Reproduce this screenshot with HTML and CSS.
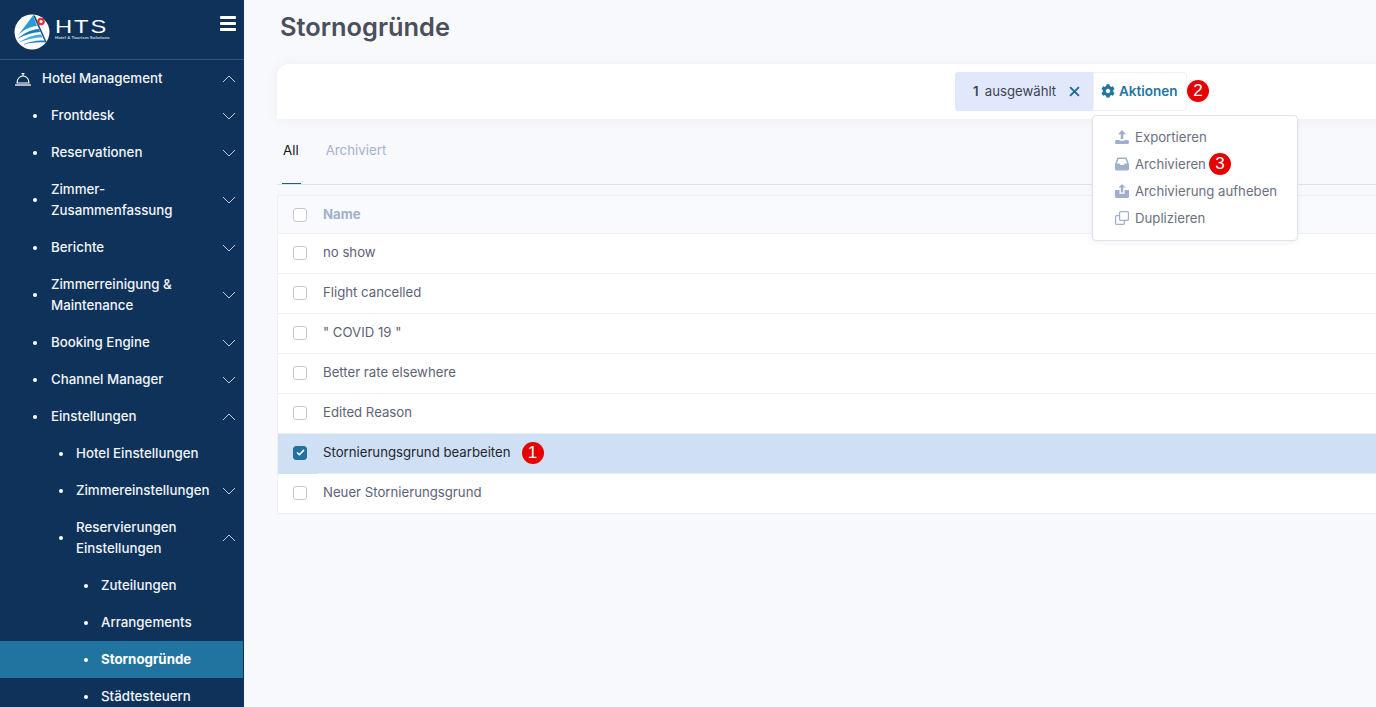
FILE: index.html
```html
<!DOCTYPE html>
<html lang="en">
<head>
    <meta charset="UTF-8">
    <meta name="viewport" content="width=device-width, initial-scale=1.0">
    <title>Stornogründe</title>
    <link rel="stylesheet" href="styles.css">
</head>
<body>
    <aside class="sidebar">
        <div class="brand">
            <svg class="brand-mark" viewBox="0 0 36 36" width="36" height="36">
                <circle cx="18" cy="18" r="17.500" fill="#fff"/>
                <path d="M19 1.500 L3.500 22 C9 16 16 12.500 23 12Z" fill="#2f9ad2"/>
                <path d="M3.500 25 C10 19 17 15.500 25 15 L26 18 C18 18.500 10 21 3.500 25Z" fill="#1c7db8"/>
                <path d="M5 28.500 C12 23.500 19 21 27 20.500 L28.500 23.500 C20 23.500 12 25.500 5 28.500Z" fill="#3fb0de"/>
                <path d="M8 31 C15 27.500 23 26 30 26.500 L32 28.500 C23 27.800 15 28.800 8 31Z" fill="#1c7db8"/>
                <path d="M19 1.500 L21 1.500 L33 29 L31 28Z" fill="#11588f"/>
                <circle cx="27" cy="7.500" r="3.800" fill="#d9363e"/>
                <circle cx="27" cy="7.500" r="1.500" fill="#fff"/>
            </svg>
            <div class="brand-text">
                <span class="brand-name">HTS</span>
                <span class="brand-sub">Hotel &amp; Tourism Solutions</span>
            </div>
            <div class="burger"><span></span><span></span><span></span></div>
        </div>
        <nav class="menu">
            <a class="menu-item level-0">
                <svg class="bell" viewBox="0 0 18 14" width="18" height="14" fill="none" stroke="#fff" stroke-width="1.100">
                    <path d="M3 11 C3 7 5.500 4 9 4 C12.500 4 15 7 15 11Z"/>
                    <path d="M9 4 V2 M7.500 1.600 H10.500"/>
                    <path d="M1 13 H17" stroke-width="1.300"/>
                </svg>
                <span class="label">Hotel Management</span>
                <svg class="chev" viewBox="0 0 14 8" width="14" height="8"><path d="M1 7 L7 1 L13 7"/></svg>
            </a>
            <a class="menu-item level-1"><span class="label">Frontdesk</span><svg class="chev" viewBox="0 0 14 8" width="14" height="8"><path d="M1 1 L7 7 L13 1"/></svg></a>
            <a class="menu-item level-1"><span class="label">Reservationen</span><svg class="chev" viewBox="0 0 14 8" width="14" height="8"><path d="M1 1 L7 7 L13 1"/></svg></a>
            <a class="menu-item level-1"><span class="label">Zimmer-<br>Zusammenfassung</span><svg class="chev" viewBox="0 0 14 8" width="14" height="8"><path d="M1 1 L7 7 L13 1"/></svg></a>
            <a class="menu-item level-1"><span class="label">Berichte</span><svg class="chev" viewBox="0 0 14 8" width="14" height="8"><path d="M1 1 L7 7 L13 1"/></svg></a>
            <a class="menu-item level-1"><span class="label">Zimmerreinigung &amp;<br>Maintenance</span><svg class="chev" viewBox="0 0 14 8" width="14" height="8"><path d="M1 1 L7 7 L13 1"/></svg></a>
            <a class="menu-item level-1"><span class="label">Booking Engine</span><svg class="chev" viewBox="0 0 14 8" width="14" height="8"><path d="M1 1 L7 7 L13 1"/></svg></a>
            <a class="menu-item level-1"><span class="label">Channel Manager</span><svg class="chev" viewBox="0 0 14 8" width="14" height="8"><path d="M1 1 L7 7 L13 1"/></svg></a>
            <a class="menu-item level-1"><span class="label">Einstellungen</span><svg class="chev" viewBox="0 0 14 8" width="14" height="8"><path d="M1 7 L7 1 L13 7"/></svg></a>
            <a class="menu-item level-2"><span class="label">Hotel Einstellungen</span></a>
            <a class="menu-item level-2"><span class="label">Zimmereinstellungen</span><svg class="chev" viewBox="0 0 14 8" width="14" height="8"><path d="M1 1 L7 7 L13 1"/></svg></a>
            <a class="menu-item level-2"><span class="label">Reservierungen<br>Einstellungen</span><svg class="chev" viewBox="0 0 14 8" width="14" height="8"><path d="M1 7 L7 1 L13 7"/></svg></a>
            <a class="menu-item level-3"><span class="label">Zuteilungen</span></a>
            <a class="menu-item level-3"><span class="label">Arrangements</span></a>
            <a class="menu-item level-3 active"><span class="label">Stornogründe</span></a>
            <a class="menu-item level-3"><span class="label">Städtesteuern</span></a>
        </nav>
    </aside>

    <main class="content">
        <h1 class="page-title">Stornogründe</h1>

        <div class="toolbar">
            <div class="selected-pill">
                <span class="selected-count"><b>1</b> ausgewählt</span>
                <svg class="close-x" viewBox="0 0 10 10" width="11" height="11"><path d="M1 1 L9 9 M9 1 L1 9"/></svg>
            </div>
            <div class="actions-wrap">
                <button class="actions-btn" type="button">
                    <svg viewBox="0 0 512 512" width="14" height="14" fill="#23759f"><path d="M487.4 315.7l-42.6-24.6c4.3-23.2 4.3-47 0-70.2l42.6-24.6c4.9-2.8 7.1-8.6 5.5-14-11.1-35.6-30-67.8-54.7-94.6-3.8-4.1-10-5.1-14.8-2.3L380.8 110c-17.9-15.4-38.5-27.3-60.8-35.1V25.8c0-5.6-3.9-10.5-9.4-11.7-36.7-8.2-74.3-7.8-109.2 0-5.5 1.2-9.4 6.1-9.4 11.7V75c-22.2 7.9-42.8 19.8-60.8 35.1L88.7 85.5c-4.9-2.8-11-1.9-14.8 2.3-24.7 26.7-43.6 58.9-54.7 94.6-1.7 5.4.6 11.2 5.5 14L67.3 221c-4.3 23.2-4.3 47 0 70.2l-42.6 24.6c-4.9 2.8-7.1 8.6-5.5 14 11.1 35.6 30 67.8 54.7 94.6 3.8 4.1 10 5.1 14.8 2.3l42.6-24.6c17.9 15.4 38.5 27.3 60.8 35.1v49.2c0 5.6 3.9 10.5 9.4 11.7 36.7 8.2 74.3 7.8 109.2 0 5.5-1.2 9.4-6.1 9.4-11.7v-49.2c22.2-7.9 42.8-19.8 60.8-35.1l42.6 24.6c4.9 2.8 11 1.9 14.8-2.3 24.7-26.7 43.6-58.9 54.7-94.6 1.5-5.5-.7-11.3-5.6-14.1zM256 336c-44.1 0-80-35.9-80-80s35.9-80 80-80 80 35.9 80 80-35.9 80-80 80z"/></svg>
                    Aktionen
                </button>
                <div class="dropdown">
                    <a class="dropdown-item">
                        <svg viewBox="0 0 14 14" width="14" height="14" fill="#9fb0cf"><path d="M7 0 L11 4.200 H8.300 V9 H5.700 V4.200 H3Z"/><path d="M0 11.500 A1.500 1.500 0 0 1 1.500 10 H4.500 V10.800 H9.500 V10 H12.500 A1.500 1.500 0 0 1 14 11.500 V12.500 A1.500 1.500 0 0 1 12.500 14 H1.500 A1.500 1.500 0 0 1 0 12.500Z"/></svg>
                        Exportieren
                    </a>
                    <a class="dropdown-item">
                        <svg viewBox="0 0 14 14" width="14" height="14" fill="#9fb0cf"><path fill-rule="evenodd" d="M2.500 0.500 H11.500 L14 7 V12 A1.500 1.500 0 0 1 12.500 13.500 H1.500 A1.500 1.500 0 0 1 0 12 V7Z M3.500 2 L1.800 6.500 H4.500 L5.500 8 H8.500 L9.500 6.500 H12.200 L10.500 2Z"/></svg>
                        Archivieren <span class="step-badge">3</span>
                    </a>
                    <a class="dropdown-item">
                        <svg viewBox="0 0 14 14" width="14" height="14" fill="#9fb0cf"><path d="M7 0 L10.500 3.500 H8.200 V8.500 H5.800 V3.500 H3.500Z"/><path d="M0 6 H4.500 V9.800 H9.500 V6 H14 V13 A1 1 0 0 1 13 14 H1 A1 1 0 0 1 0 13Z"/></svg>
                        Archivierung aufheben
                    </a>
                    <a class="dropdown-item">
                        <svg viewBox="0 0 14 14" width="14" height="14" fill="none" stroke="#9fb0cf" stroke-width="1.200"><rect x="4.600" y="0.600" width="8.800" height="8.800" rx="1"/><path d="M4.600 4.600 H1.600 A1 1 0 0 0 0.600 5.600 V12.400 A1 1 0 0 0 1.600 13.400 H8.400 A1 1 0 0 0 9.400 12.400 V9.400"/></svg>
                        Duplizieren
                    </a>
                </div>
            </div>
            <span class="step-badge">2</span>
        </div>

        <div class="tabs">
            <a class="tab tab-active">All</a>
            <a class="tab">Archiviert</a>
        </div>

        <div class="table">
            <div class="row row-head">
                <div class="check-cell"><span class="checkbox"></span></div>
                <div class="name-cell">Name</div>
            </div>
            <div class="row">
                <div class="check-cell"><span class="checkbox"></span></div>
                <div class="name-cell">no show</div>
            </div>
            <div class="row">
                <div class="check-cell"><span class="checkbox"></span></div>
                <div class="name-cell">Flight cancelled</div>
            </div>
            <div class="row">
                <div class="check-cell"><span class="checkbox"></span></div>
                <div class="name-cell">" COVID 19 "</div>
            </div>
            <div class="row">
                <div class="check-cell"><span class="checkbox"></span></div>
                <div class="name-cell">Better rate elsewhere</div>
            </div>
            <div class="row">
                <div class="check-cell"><span class="checkbox"></span></div>
                <div class="name-cell">Edited Reason</div>
            </div>
            <div class="row row-selected">
                <div class="check-cell">
                    <span class="checkbox checked">
                        <svg viewBox="0 0 10 8" width="9" height="7" fill="none" stroke="#fff" stroke-width="1.800"><path d="M1 4 L3.800 6.500 L9 1"/></svg>
                    </span>
                </div>
                <div class="name-cell">Stornierungsgrund bearbeiten <span class="step-badge">1</span></div>
            </div>
            <div class="row">
                <div class="check-cell"><span class="checkbox"></span></div>
                <div class="name-cell">Neuer Stornierungsgrund</div>
            </div>
        </div>
    </main>
</body>
</html>
```

FILE: styles.css
```css
* {
    box-sizing: border-box;
}

html,
body {
    height: 100%;
}

body {
    display: flex;
    margin: 0;
    overflow: hidden;
    font-family: Inter, "Liberation Sans", sans-serif;
    font-size: 13.200px;
    color: #5e6278;
    background-color: #f8f9fc;
}

/* sidebar */
.sidebar {
    flex: 0 0 244px;
    height: 707px;
    overflow: hidden;
    background-color: #0e3259;
    color: #fff;
}

.brand {
    display: flex;
    align-items: flex-start;
    height: 60px;
    padding: 14px 8px 0 14px;
    border-bottom: 1px solid #35547a;
}

.brand-mark {
    flex: none;
}

.brand-text {
    display: flex;
    flex-direction: column;
    margin: 4px 0 0 5px;
}

.brand-name {
    font-family: "Liberation Sans", sans-serif;
    font-size: 19px;
    line-height: 17px;
    letter-spacing: 1.500px;
    transform: scaleX(1.250);
    transform-origin: left;
}

.brand-sub {
    font-family: "Liberation Sans", sans-serif;
    font-size: 4.400px;
    font-weight: bold;
    line-height: 6px;
    color: #c9d3df;
}

.burger {
    display: flex;
    flex-direction: column;
    gap: 3px;
    width: 16px;
    margin: 2px 0 0 auto;
}

.burger span {
    height: 3px;
    border-radius: 1px;
    background-color: #fff;
}

.menu {
    display: flex;
    flex-direction: column;
}

.menu-item {
    position: relative;
    display: flex;
    align-items: center;
    padding: 8px 8px 8px 51px;
    font-size: 13.300px;
    font-weight: 500;
    line-height: 21px;
    color: #f2f5f9;
}

.menu-item.level-0 {
    padding-left: 14px;
}

.menu-item.level-2 {
    padding-left: 76px;
}

.menu-item.level-3 {
    padding-left: 101px;
}

/* bullet in front of the sub items */
.level-1::before,
.level-2::before,
.level-3::before {
    content: "";
    position: absolute;
    top: 50%;
    width: 4px;
    height: 4px;
    margin-top: -2px;
    border-radius: 50%;
    background-color: #fff;
}

.level-1::before {
    left: 33px;
}

.level-2::before {
    left: 59px;
}

.level-3::before {
    left: 84px;
}

.menu-item.active {
    width: 243px;
    font-weight: 700;
    color: #fff;
    background-color: #2274a0;
}

.bell {
    margin-right: 10px;
}

.chev {
    flex: none;
    margin-left: auto;
    fill: none;
    stroke: #c3cede;
    stroke-width: 1;
}

/* main area */
.content {
    flex: 1;
    min-width: 0;
    padding-left: 33px;
}

.page-title {
    margin: 0;
    padding: 11px 0 0 3px;
    height: 64px;
    font-size: 25.400px;
    font-weight: 600;
    line-height: 32px;
    color: #4b4f5c;
}

.toolbar {
    display: flex;
    align-items: center;
    height: 55px;
    margin-right: -30px;
    padding: 0 0 1px 678px;
    border-radius: 12px 12px 0 0;
    background-color: #fff;
    box-shadow: 0 0 12px rgba(60, 80, 130, 0.07);
}

.selected-pill {
    display: flex;
    align-items: center;
    justify-content: space-between;
    width: 138px;
    height: 39px;
    padding: 0 13px 0 18px;
    border-radius: 3px 0 0 3px;
    color: #3f4254;
    background-color: #e1e8fb;
}

.selected-count {
    word-spacing: 2.500px;
}

.selected-pill b {
    font-weight: 600;
}

.close-x {
    fill: none;
    stroke: #23699a;
    stroke-width: 1.800;
}

.actions-wrap {
    position: relative;
}

.actions-btn {
    display: flex;
    align-items: center;
    gap: 4px;
    width: 94px;
    height: 39px;
    padding: 0 7px;
    border: 1px solid #eef1f6;
    border-radius: 0 3px 3px 0;
    font-family: inherit;
    font-size: 13.500px;
    font-weight: 600;
    color: #23759f;
    background-color: #fff;
}

.dropdown {
    position: absolute;
    top: 43px;
    left: -1px;
    z-index: 5;
    width: 206px;
    padding: 8px 0 8px 22px;
    border: 1px solid #dfe3ea;
    border-radius: 4px;
    background-color: #fff;
    box-shadow: 0 2px 6px rgba(0, 0, 0, 0.05);
}

.dropdown-item {
    display: flex;
    align-items: center;
    gap: 6px;
    height: 27px;
    white-space: nowrap;
    color: #6c7080;
}

.step-badge {
    display: inline-flex;
    align-items: center;
    justify-content: center;
    width: 22px;
    height: 22px;
    border-radius: 50%;
    font-family: "Liberation Sans", sans-serif;
    font-size: 17px;
    color: #fff;
    background-color: #e60000;
}

.dropdown-item .step-badge {
    margin-left: -3px;
}

.name-cell .step-badge {
    margin: 2px 0 0 11px;
}

/* tabs */
.tabs {
    display: flex;
    gap: 27px;
    height: 66px;
    margin-right: -30px;
    padding: 23px 0 0 6px;
    border-bottom: 1px solid #dfe2e8;
    font-size: 13.300px;
}

.tab {
    color: #a5b3cd;
}

.tab-active {
    position: relative;
    height: 42px;
    color: #16181d;
}

.tab-active::after {
    content: "";
    position: absolute;
    left: -1px;
    right: -2px;
    bottom: 0;
    height: 1px;
    background-color: #1f5c86;
}

/* table */
.table {
    margin: 10px -30px 0 0;
    border-left: 1px solid #eceff4;
    border-top: 1px solid #eceff4;
}

.row {
    display: flex;
    height: 40px;
    background-color: #fff;
}

.row-head {
    height: 38px;
    font-weight: 700;
    color: #a2b1cc;
    background-color: #f9fafd;
}

.check-cell {
    display: flex;
    flex: 0 0 40px;
    align-items: center;
    padding: 0 0 2px 15px;
    border-bottom: 1px solid #eceff4;
}

.row-head .check-cell {
    padding-bottom: 0;
}

.name-cell {
    display: flex;
    flex: 1;
    align-items: center;
    padding: 0 0 3px 5px;
    border-bottom: 1px solid #eceff4;
}

.row-head .name-cell {
    padding-bottom: 1px;
}

.row-selected {
    background-color: #cfe0f5;
    color: #23262f;
}

.row-selected .check-cell {
    border-bottom-color: #cfe0f5;
}

.checkbox {
    display: flex;
    align-items: center;
    justify-content: center;
    width: 14px;
    height: 14px;
    border: 1px solid #c6c8cc;
    border-radius: 3px;
    background-color: #fff;
}

.checkbox.checked {
    border-color: #23719f;
    background-color: #23719f;
}
```
